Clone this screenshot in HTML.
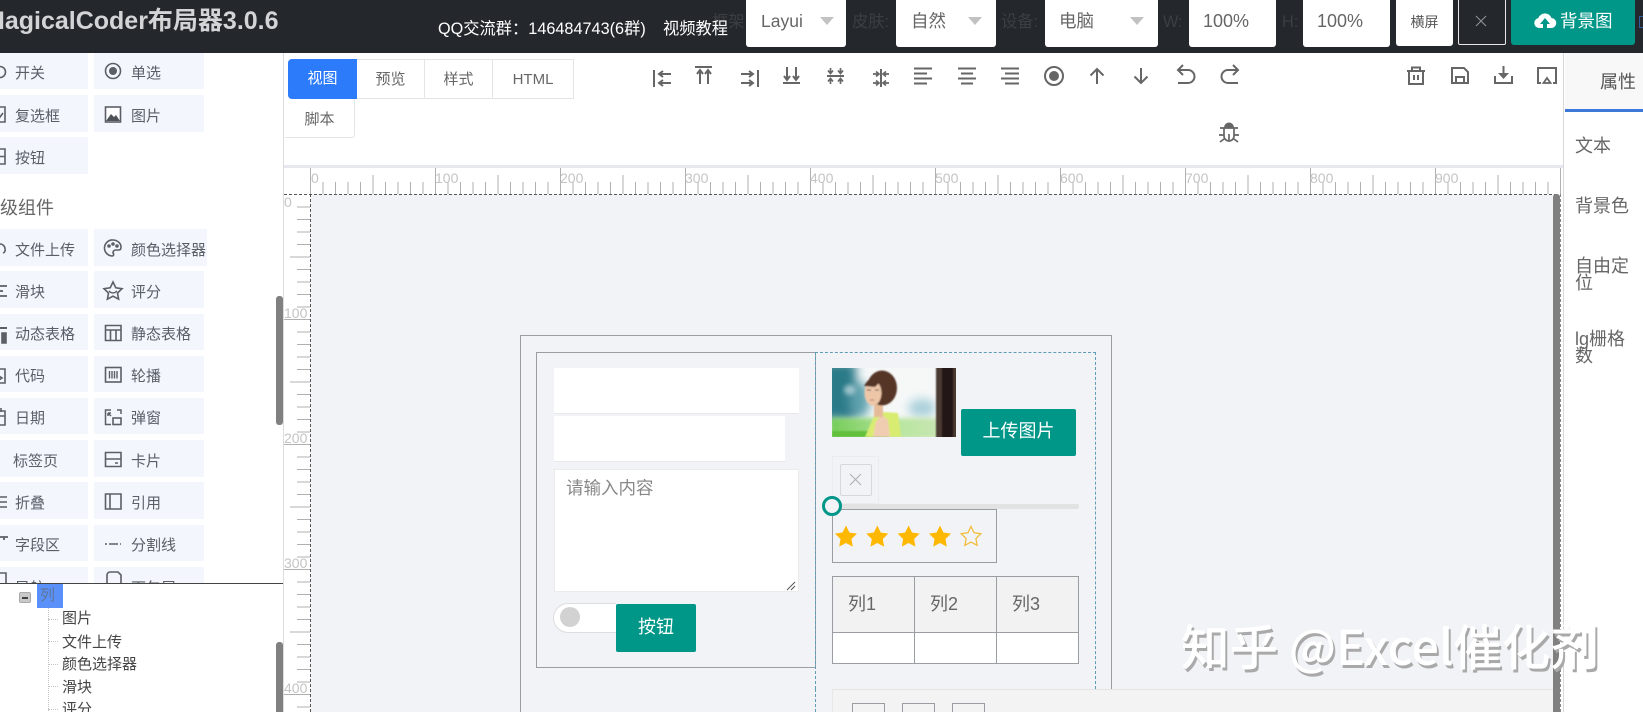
<!DOCTYPE html>
<html lang="zh">
<head>
<meta charset="utf-8">
<title>MagicalCoder</title>
<style>
html,body{margin:0;padding:0;background:#fff;width:1643px;height:712px;overflow:hidden}
body{position:relative;font-family:"Liberation Sans","Noto Sans CJK SC",sans-serif;color:#666}
div{position:absolute;box-sizing:border-box;white-space:nowrap}
svg{position:absolute;overflow:visible}
.i{background:#f3f6fd;font-size:15px;color:#5a5f66;padding-top:3px}
.c1{left:0;width:88px;padding-left:15px}
.c2{left:94px;width:110px;padding-left:37px}
.w{background:#fff;border-radius:0 0 3px 3px;top:0;height:47px;color:#666;font-size:18px;line-height:42px}
.car{width:0;height:0;border:7px solid transparent;border-top:8px solid #c2c2c2;border-bottom:0;top:17px}
.dim{color:#3b3f43;font-size:16.25px;top:10px;line-height:24px}
.tab{top:59px;height:40px;line-height:39px;font-size:15px;text-align:center;border:1px solid #e4e4e4;border-left:0;background:#fff;color:#666}
.tr{left:62px;font-size:15px;color:#444;line-height:22px;height:22px}
.rp{left:1575px;font-size:18px;color:#666;line-height:17px}
.tc{top:604px;font-size:18px;color:#666;line-height:20px;height:20px;margin-top:-10px}
</style>
</head>
<body>
<div style="left:0;top:0;width:1643px;height:712px;overflow:hidden;background:#fff">

<!-- left component panel -->
<div style="left:0;top:53px;width:284px;height:530px;background:#fff;overflow:hidden">
  <div class="i c1" style="top:0;height:36px;line-height:36px">开关</div>
  <div class="i c2" style="top:0;height:36px;line-height:36px">单选</div>
  <div class="i c1" style="top:42px;height:37px;line-height:37px">复选框</div>
  <div class="i c2" style="top:42px;height:37px;line-height:37px">图片</div>
  <div class="i c1" style="top:84px;height:37px;line-height:37px">按钮</div>
  <div style="left:-18px;top:143px;font-size:18px;color:#666;line-height:24px">高级组件</div>
  <div class="i c1" style="top:176px;height:37px;line-height:37px">文件上传</div>
  <div class="i c2" style="top:176px;height:37px;line-height:37px;width:113px">颜色选择器</div>
  <div class="i c1" style="top:218px;height:37px;line-height:37px">滑块</div>
  <div class="i c2" style="top:218px;height:37px;line-height:37px">评分</div>
  <div class="i c1" style="top:261px;height:36px;line-height:36px">动态表格</div>
  <div class="i c2" style="top:261px;height:36px;line-height:36px">静态表格</div>
  <div class="i c1" style="top:303px;height:36px;line-height:36px">代码</div>
  <div class="i c2" style="top:303px;height:36px;line-height:36px">轮播</div>
  <div class="i c1" style="top:345px;height:36px;line-height:36px">日期</div>
  <div class="i c2" style="top:345px;height:36px;line-height:36px">弹窗</div>
  <div class="i c1" style="top:387px;height:37px;line-height:37px;padding-left:13px">标签页</div>
  <div class="i c2" style="top:387px;height:37px;line-height:37px">卡片</div>
  <div class="i c1" style="top:429px;height:37px;line-height:37px">折叠</div>
  <div class="i c2" style="top:429px;height:37px;line-height:37px">引用</div>
  <div class="i c1" style="top:472px;height:36px;line-height:36px">字段区</div>
  <div class="i c2" style="top:472px;height:36px;line-height:36px">分割线</div>
  <div class="i c1" style="top:514px;height:37px;line-height:37px">导航</div>
  <div class="i c2" style="top:514px;height:37px;line-height:37px">面包屑</div>
</div>
<svg width="284" height="583" viewBox="0 0 284 583" style="left:0;top:0;overflow:hidden" fill="none" stroke="#5c6066" stroke-width="1.6">
  <!-- col 1 cut icons -->
  <circle cx="0" cy="72" r="5.500"/>
  <path d="M-8 107H5V122H-8M-2 115l2 2 3-4"/>
  <path d="M-8 149H5V164H-8M-2 156.500H5"/>
  <path d="M0 244a5 5 0 0 1 5 5 3 3 0 0 1-2 4"/>
  <path d="M-2 286H7M-2 291H3M-2 296H7" stroke-width="1.800"/>
  <path d="M-2 328H7" stroke-width="2"/><path d="M2 333H6V343H2Z" fill="#5c6066"/>
  <path d="M-5 369H5V383H-5ZM-1 376l3 2-3 2"/>
  <path d="M-5 411H5V425H-5ZM-5 416H5M1 408v4"/>
  <path d="M-2 497H7M-2 502H7M-2 507H7" stroke-width="1.600"/>
  <path d="M0 537H8M4 537v3" stroke-width="1.800"/>
  <path d="M-5 573H6V583"/>
  <!-- col 2 icons -->
  <circle cx="113" cy="71" r="7.500"/><circle cx="113" cy="71" r="4" fill="#5c6066" stroke="none"/>
  <rect x="105.500" y="107" width="15" height="15" fill="#fff" stroke-width="1.600"/>
  <path d="M106 121l5-7 3 3 2-2 4 6z" fill="#4f5358" stroke="none"/>
  <path d="M113 240a8 8 0 1 0-1 16c2 0 2-2 1-3 0-2 1-3 3-3h3c1.500 0 2-1 2-3 0-4-4-7-8-7z"/>
  <circle cx="109" cy="246" r="1" fill="#5c6066"/><circle cx="113" cy="244" r="1" fill="#5c6066"/><circle cx="117" cy="246" r="1" fill="#5c6066"/>
  <path d="M113 282l2.800 5.800 6.200.9-4.500 4.300 1.100 6.200-5.600-3-5.600 3 1.100-6.200-4.500-4.300 6.200-.9z"/>
  <path d="M109 291q4 4 8 0" stroke-width="1.300"/>
  <path d="M105.500 325.500H121V340.500H105.500ZM105.500 330H121M110.500 330V340.500M116 330V340.500"/>
  <rect x="105.500" y="367.500" width="15.500" height="14.500"/>
  <path d="M109.500 371v7.500M112 371v7.500M114.500 371v7.500M117 371v7.500" stroke-width="1.400"/>
  <path d="M111 410H105.500V424.500H111M117 410H121V414M108 413l3 3M108 413v3M108 413h3" stroke-width="1.500"/>
  <rect x="113" y="418" width="8" height="6.500"/>
  <path d="M105.500 452.500H121V466.500H105.500ZM105.500 459H121M115 463h3"/>
  <path d="M105.500 494H121V509H105.500ZM110 494V509"/>
  <path d="M105 544h2M109 544h9M120 544h1" stroke-width="1.500"/>
  <path d="M107 584v-9a3 3 0 0 1 3-3h8l3 3v9"/>
</svg>

<!-- tree panel -->
<div style="left:0;top:583px;width:284px;height:129px;background:#fff;border-top:1px solid #444">
  <div style="left:37px;top:0;width:26px;height:24px;background:#5a90f9;color:#5f7699;font-size:15px;line-height:23px;padding-left:3px">列</div>
  <div style="left:19px;top:8px;width:12px;height:11px;background:#c9c9c9;border:1px solid #aaa;border-radius:2px"></div>
  <div style="left:22px;top:13px;width:6px;height:2px;background:#444"></div>
  <div style="left:48px;top:24px;width:0;height:105px;border-left:1px dotted #c4c4c4"></div>
  <div style="left:48px;top:35px;width:10px;border-top:1px dotted #c4c4c4"></div>
  <div style="left:48px;top:57px;width:10px;border-top:1px dotted #c4c4c4"></div>
  <div style="left:48px;top:80px;width:10px;border-top:1px dotted #c4c4c4"></div>
  <div style="left:48px;top:102px;width:10px;border-top:1px dotted #c4c4c4"></div>
  <div style="left:48px;top:125px;width:10px;border-top:1px dotted #c4c4c4"></div>
  <div class="tr" style="top:24px">图片</div>
  <div class="tr" style="top:48px">文件上传</div>
  <div class="tr" style="top:70px">颜色选择器</div>
  <div class="tr" style="top:93px">滑块</div>
  <div class="tr" style="top:115px">评分</div>
</div>
<div style="left:276px;top:296px;width:7px;height:129px;background:#808080;border-radius:3px"></div>
<div style="left:276px;top:642px;width:7px;height:80px;background:#808080;border-radius:3px"></div>
<div style="left:283px;top:53px;width:1px;height:659px;background:#dcdcdc"></div>

<!-- canvas -->
<div style="left:310px;top:194px;width:1243px;height:518px;background:#f1f3f6"></div>

<!-- canvas components -->
<div style="left:520px;top:335px;width:592px;height:400px;border:1px solid #9a9ea3"></div>
<div style="left:536px;top:352px;width:280px;height:316px;border:1px solid #9a9ea3"></div>
<div style="left:815px;top:352px;width:281px;height:337px;border:1px dashed #5f9cb5;border-bottom:0"></div>
<div style="left:815px;top:689px;width:0;height:23px;border-left:1px dashed #5f9cb5"></div>

<div style="left:554px;top:368px;width:245px;height:46px;background:#fff;border-bottom:1px solid #e8e8e8"></div>
<div style="left:554px;top:416px;width:231px;height:46px;background:#fff;border-bottom:1px solid #e8e8e8"></div>
<div style="left:554px;top:469px;width:245px;height:123px;background:#fff;border:1px solid #ebebeb;color:#888;font-size:17.500px;line-height:24px;padding:6px 0 0 11px">请输入内容</div>
<svg width="12" height="10" style="left:786px;top:581px" stroke="#555" fill="none" stroke-width="1"><path d="M1 9l8-8M5 9l4-4"/></svg>
<div style="left:553px;top:603px;width:63px;height:30px;background:#fff;border:1px solid #ddd;border-radius:15px 0 0 15px;border-right:0"></div>
<div style="left:560px;top:607px;width:20px;height:20px;background:#d2d2d2;border-radius:50%"></div>
<div style="left:616px;top:604px;width:80px;height:48px;background:#009688;border-radius:2px;color:#fff;font-size:18px;line-height:47px;text-align:center">按钮</div>

<!-- photo -->
<svg width="124" height="69" viewBox="0 0 124 69" style="left:832px;top:368px;overflow:hidden">
  <defs>
    <filter id="b1" x="-30%" y="-30%" width="160%" height="160%"><feGaussianBlur stdDeviation="5"/></filter>
    <filter id="b2" x="-30%" y="-30%" width="160%" height="160%"><feGaussianBlur stdDeviation=".7"/></filter>
    <filter id="b3" x="-30%" y="-30%" width="160%" height="160%"><feGaussianBlur stdDeviation="2.500"/></filter>
    <linearGradient id="gr" x1="0" x2="1" y1="0" y2="0"><stop offset="0" stop-color="#74cc58"/><stop offset=".55" stop-color="#b9e6a0"/><stop offset="1" stop-color="#cfe4bc"/></linearGradient>
  </defs>
  <rect width="124" height="69" fill="#f6f8f8"/>
  <g filter="url(#b1)">
    <rect x="-10" y="-6" width="34" height="58" fill="#2a7a88"/>
    <ellipse cx="28" cy="32" rx="10" ry="18" fill="#5ea1ae"/>
    <ellipse cx="90" cy="40" rx="14" ry="9" fill="#a8cfda"/>
  </g>
  <ellipse cx="18" cy="22" rx="6" ry="5" fill="#9cc4cc" filter="url(#b3)"/>
  <rect x="-2" y="50" width="128" height="21" fill="url(#gr)" filter="url(#b3)"/>
  <rect x="0" y="63" width="56" height="6" fill="#62c03e" filter="url(#b2)"/>
  <rect x="104" y="-3" width="24" height="75" fill="#4a3a32" filter="url(#b2)"/>
  <rect x="110" y="-3" width="11" height="75" fill="#241915" filter="url(#b2)"/>
  <g filter="url(#b2)">
    <path d="M33 69L41 50 52 44 66 45 69 69Z" fill="#d9ec72"/>
    <path d="M41 69L44 53 50 47 56 52 58 69Z" fill="#f0cdb0"/>
    <rect x="42" y="36" width="9" height="13" fill="#e6bb9a"/>
    <ellipse cx="50" cy="20" rx="15" ry="17.500" fill="#553628"/>
    <ellipse cx="41" cy="25" rx="8.500" ry="12.500" fill="#edc6a8"/>
    <path d="M32 18q7-13 20-8l-9 9z" fill="#553628"/>
    <path d="M35 22h4M43 22h4" stroke="#4a3028" stroke-width="1"/>
    <path d="M38 32h4" stroke="#b9695a" stroke-width="1"/>
  </g>
</svg>

<div style="left:961px;top:409px;width:115px;height:47px;background:#009688;border-radius:2px;color:#fff;font-size:18px;line-height:45px;text-align:center">上传图片</div>
<div style="left:832px;top:456px;width:47px;height:48px;border:1px solid #ececec"></div>
<div style="left:840px;top:464px;width:32px;height:32px;border:1px solid #d8d8d8;border-radius:2px"></div>
<svg width="14" height="14" style="left:849px;top:473px" stroke="#b0b0b0" fill="none" stroke-width="1.100"><path d="M1 1l11 11M12 1L1 12"/></svg>
<div style="left:832px;top:504px;width:247px;height:5px;background:#e2e2e2;border-radius:2px"></div>
<div style="left:832px;top:509px;width:165px;height:54px;border:1px solid #9a9ea3"></div>
<div style="left:822px;top:496px;width:20px;height:20px;background:#f1f3f6;border:3.500px solid #009688;border-radius:50%"></div>

<!-- stars -->
<svg width="170" height="30" viewBox="0 0 170 30" style="left:832px;top:522px">
  <path d="M14 3.500l3.400 7 7.600 1.100-5.500 5.400 1.300 7.600L14 21l-6.800 3.600 1.300-7.600L3 11.600l7.600-1.100z" fill="#ffb800"/>
  <path d="M45.300 3.500l3.400 7 7.600 1.100-5.500 5.400 1.300 7.600-6.800-3.600-6.800 3.600 1.300-7.600-5.500-5.400 7.600-1.100z" fill="#ffb800"/>
  <path d="M76.600 3.500l3.400 7 7.600 1.100-5.500 5.400 1.300 7.600-6.800-3.600-6.800 3.600 1.300-7.600-5.500-5.400 7.600-1.100z" fill="#ffb800"/>
  <path d="M108 3.500l3.400 7 7.600 1.100-5.500 5.400 1.300 7.600L108 21l-6.800 3.600 1.300-7.600-5.500-5.400 7.600-1.100z" fill="#ffb800"/>
  <path d="M139 4.500l3 6.200 6.800 1-4.900 4.800 1.200 6.800-6.100-3.200-6.100 3.200 1.200-6.800-4.900-4.800 6.800-1z" fill="none" stroke="#f3bd3c" stroke-width="1.300"/>
</svg>

<!-- table -->
<div style="left:832px;top:576px;width:247px;height:88px;border:1px solid #9a9ea3;background:#fff"></div>
<div style="left:833px;top:577px;width:245px;height:56px;background:#f2f2f2;border-bottom:1px solid #9a9ea3"></div>
<div style="left:914px;top:577px;width:1px;height:86px;background:#9a9ea3"></div>
<div style="left:996px;top:577px;width:1px;height:86px;background:#9a9ea3"></div>
<div class="tc" style="left:848px">列1</div>
<div class="tc" style="left:930px">列2</div>
<div class="tc" style="left:1012px">列3</div>

<!-- bottom component -->
<div style="left:832px;top:689px;width:721px;height:23px;background:#f3f3f3;border-top:1px solid #e4e4e4;border-left:1px solid #e8e8e8"></div>
<div style="left:852px;top:703px;width:33px;height:12px;border:1px solid #9a9ea3"></div>
<div style="left:902px;top:703px;width:33px;height:12px;border:1px solid #9a9ea3"></div>
<div style="left:952px;top:703px;width:33px;height:12px;border:1px solid #9a9ea3"></div>

<!-- toolbar -->
<div style="left:284px;top:53px;width:1279px;height:112px;background:#fff"></div>
<div style="left:284px;top:165px;width:1279px;height:3px;background:#e6e8ee"></div>
<div class="tab" style="left:288px;width:69px;background:#2c7bfb;color:#fff;border:0;line-height:40px;border-radius:4px 0 0 4px">视图</div>
<div class="tab" style="left:357px;width:68px">预览</div>
<div class="tab" style="left:425px;width:68px">样式</div>
<div class="tab" style="left:493px;width:81px">HTML</div>
<div style="left:285px;top:99px;width:70px;height:39px;border:1px solid #e4e4e4;border-top:0;border-left:0;border-radius:0 0 3px 0;font-size:15px;line-height:41px;text-align:center;color:#666">脚本</div>

<!-- rulers -->
<svg width="1280" height="544" viewBox="284 168 1280 544" style="left:284px;top:168px;overflow:hidden" font-family="Liberation Sans, sans-serif">
  <defs>
    <pattern id="hr" x="310" y="168" width="125" height="26" patternUnits="userSpaceOnUse">
      <path d="M.5 0V26M63 7V26M13 14V26M25.500 14V26M38 14V26M50.500 14V26M75.500 14V26M88 14V26M100.500 14V26M113 14V26" stroke="#b0b0b0" stroke-width="1" fill="none"/>
    </pattern>
    <pattern id="vr" x="284" y="194" width="26" height="125" patternUnits="userSpaceOnUse">
      <path d="M0 .5H26M6 63H26M13 13H26M13 25.500H26M13 38H26M13 50.500H26M13 75.500H26M13 88H26M13 100.500H26M13 113H26" stroke="#b0b0b0" stroke-width="1" fill="none"/>
    </pattern>
  </defs>
  <rect x="310" y="168" width="1250" height="26" fill="url(#hr)"/>
  <rect x="284" y="195" width="26" height="517" fill="url(#vr)"/>
  <path d="M1560.500 168V194" stroke="#b0b0b0"/>
  <g fill="#c4c4c4" font-size="14">
    <text x="311" y="183">0</text><text x="435" y="183">100</text><text x="560" y="183">200</text><text x="685" y="183">300</text><text x="810" y="183">400</text><text x="935" y="183">500</text><text x="1060" y="183">600</text><text x="1185" y="183">700</text><text x="1310" y="183">800</text><text x="1435" y="183">900</text>
    <text x="284" y="207">0</text><text x="284" y="318">100</text><text x="284" y="443">200</text><text x="284" y="568">300</text><text x="284" y="693">400</text>
  </g>
  <path d="M284 194.500H1558M310.500 194V712" stroke="#555" stroke-width="1" stroke-dasharray="3 2" fill="none"/>
</svg>

<!-- right side scrollbar + panel -->
<div style="left:1553px;top:194px;width:7px;height:518px;background:#808080;border-radius:3px 3px 0 0"></div>
<div style="left:1560px;top:194px;width:0;height:518px;border-left:1px dashed #888"></div>
<div style="left:1561px;top:194px;width:82px;height:518px;background:#fff"></div>
<div style="left:1563px;top:53px;width:80px;height:659px;background:#fff;border-left:1px solid #d8d8d8"></div>
<div style="left:1565px;top:53px;width:78px;height:56px;background:#f8f8f8;color:#555;font-size:18px;line-height:58px;padding-left:35px">属性</div>
<div style="left:1565px;top:109px;width:78px;height:3px;background:#3b78d8"></div>
<div class="rp" style="top:138px">文本</div>
<div class="rp" style="top:198px">背景色</div>
<div class="rp" style="top:258px;white-space:normal;width:60px">自由定位</div>
<div class="rp" style="top:331px;white-space:normal;width:60px">lg栅格数</div>

<!-- toolbar icons -->
<svg width="1643" height="712" viewBox="0 0 1643 712" style="left:0;top:0;pointer-events:none" fill="none" stroke="#666" stroke-width="2">
  <path d="M654 70V87M671 74H659M663 71l-4 3 4 3M671 83H659M663 80l-4 3 4 3"/>
  <path d="M695 67H712M700 84V71M697 74l3-4 3 4M708 84V71M705 74l3-4 3 4"/>
  <path d="M758 70V87M741 74H753M749 71l4 3-4 3M741 83H753M749 80l4 3-4 3"/>
  <path d="M783 83H800M787 67V79M784 76l3 4 3-4M796 67V79M793 76l3 4 3-4"/>
  <path d="M827 76H844"/>
  <path d="M830.500 68V72M840.500 68V72M828 70.500l2.500 3 2.500-3M838 70.500l2.500 3 2.500-3M830.500 84V80M840.500 84V80M828 81.500l2.500-3 2.500 3M838 81.500l2.500-3 2.500 3" stroke-width="1.700"/>
  <path d="M881 69V87"/>
  <path d="M873 74H878M873 83H878M876 71.500l3 2.500-3 2.500M876 80.500l3 2.500-3 2.500M889 74H884M889 83H884M886 71.500l-3 2.500 3 2.500M886 80.500l-3 2.500 3 2.500" stroke-width="1.700"/>
  <path d="M914 68.500H932M914 73.500H927M914 78.500H932M914 83.500H927"/>
  <path d="M958 68.500H976M961 73.500H973M958 78.500H976M961 83.500H973"/>
  <path d="M1001 68.500H1019M1005 73.500H1019M1001 78.500H1019M1005 83.500H1019"/>
  <circle cx="1054" cy="76" r="9"/><circle cx="1054" cy="76" r="5" fill="#666" stroke="none"/>
  <path d="M1097 84V69M1090.500 75.500l6.500-6.500 6.500 6.500"/>
  <path d="M1141 68V83M1134.500 76.500l6.500 6.500 6.500-6.500"/>
  <path d="M1178 70H1188a6.500 6.500 0 0 1 0 13H1178M1183 65l-5 5 5 5"/>
  <path d="M1238 70H1228a6.500 6.500 0 0 0 0 13H1238M1233 65l5 5-5 5"/>
  <path d="M1225 127.500a4 4 0 0 1 8 0z" fill="#666"/>
  <path d="M1220 128H1238M1224 128V136a5 5 0 0 0 10 0V128M1219 135H1224M1234 135H1239M1220 142l4-3M1238 142l-4-3M1229 134V140" stroke-width="1.700"/>
  <path d="M1407 71H1425M1412 71V67.500H1420V71M1409 71V84H1423V71M1414 75V80M1418 75V80"/>
  <path d="M1452 68H1464L1468 72V83H1452ZM1456 83V77H1464V83"/>
  <path d="M1495 76V83H1512V76M1503.500 66V76"/>
  <path d="M1498 73h11l-5.500 6z" fill="#666" stroke="none"/>
  <path d="M1541 83H1538V68H1556V83H1553"/>
  <path d="M1547 78l3.500 5h-7z" stroke-width="1.800"/>
</svg>

<!-- header -->
<div style="left:0;top:0;width:1643px;height:53px;background:#24282c"></div>
<div style="left:-16px;top:0;font-size:25px;font-weight:bold;color:#d2d4d6;line-height:43px">MagicalCoder布局器3.0.6</div>
<div class="dim" style="left:712px">框架:</div>
<div style="left:438px;top:17px;font-size:16.250px;color:#fff;line-height:24px">QQ交流群：146484743(6群)</div>
<div style="left:663px;top:17px;font-size:16.250px;color:#fff;line-height:24px">视频教程</div>
<div class="w" style="left:746px;width:100px;padding-left:15px;font-size:17.500px">Layui</div>
<div class="car" style="left:820px"></div>
<div class="dim" style="left:852px">皮肤:</div>
<div class="w" style="left:896px;width:100px;padding-left:15px;font-size:17.500px">自然</div>
<div class="car" style="left:968px"></div>
<div class="dim" style="left:1001px">设备:</div>
<div class="w" style="left:1045px;width:113px;padding-left:14px;font-size:17.500px">电脑</div>
<div class="car" style="left:1130px"></div>
<div class="dim" style="left:1163px">W:</div>
<div class="w" style="left:1189px;width:87px;padding-left:14px">100%</div>
<div class="dim" style="left:1282px">H:</div>
<div class="w" style="left:1303px;width:87px;padding-left:14px">100%</div>
<div class="w" style="left:1396px;width:57px;height:46px;font-size:14px;line-height:45px;text-align:center;color:#555">横屏</div>
<div style="left:1458px;top:-2px;width:48px;height:47px;border:1px solid #e8e8e8;border-radius:2px;background:#24282c"></div>
<svg width="14" height="14" style="left:1475px;top:15px" stroke="#8f9295" fill="none" stroke-width="1.100"><path d="M1 1l10 10M11 1L1 11"/></svg>
<div style="left:1511px;top:0;width:124px;height:45px;background:#009688;border-radius:0 0 3px 3px;color:#fff;font-size:17.500px;line-height:42px;padding-left:49px">背景图</div>
<svg width="24" height="20" viewBox="0 0 24 20" style="left:1533px;top:11px"><path d="M6 17a5 5 0 0 1-.7-9.900A7 7 0 0 1 18.500 7a5 5 0 0 1-.5 10h-4v-4h3l-5-6-5 6h3v4z" fill="#fff"/></svg>
<div style="left:1639px;top:16px;width:4px;height:12px;border:1px solid #2e5c9c;border-right:0"></div>

<!-- watermark -->
<div style="left:1181px;top:612px;font-family:'Noto Sans CJK SC','Liberation Sans',sans-serif;font-size:48.500px;font-weight:500;line-height:64px;color:#fff;text-shadow:2px 3px 0 #a9a9a9">知乎 @Excel催化剂</div>

</div>
</body>
</html>
